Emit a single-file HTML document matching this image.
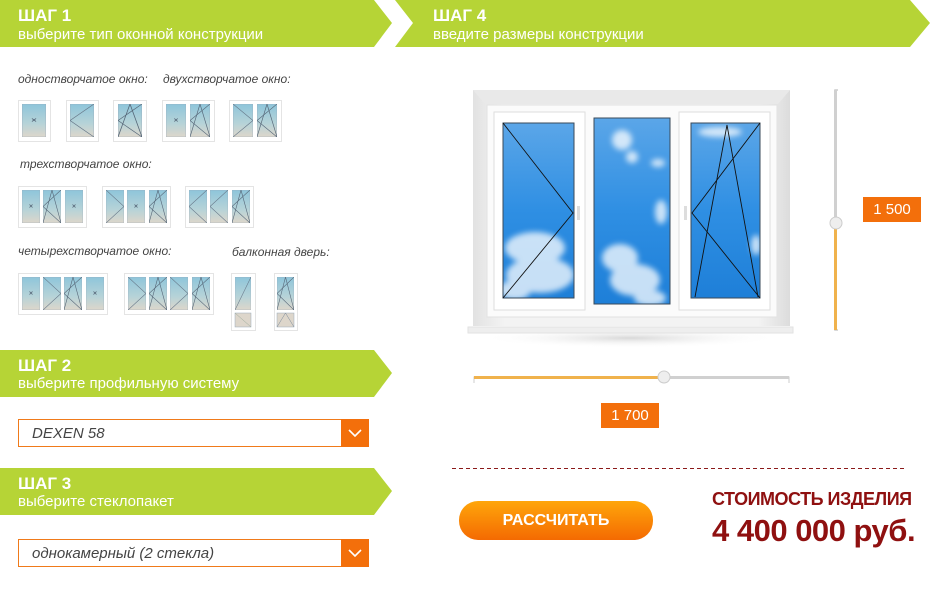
<!DOCTYPE html>
<html><head><meta charset="utf-8"><style>
*{margin:0;padding:0;box-sizing:border-box}
body{width:942px;height:604px;background:#fff;position:relative;overflow:hidden;font-family:"Liberation Sans",sans-serif}
.a{position:absolute}
.h1{position:absolute;color:#fff;font-weight:bold;font-size:17px;line-height:18px}
.h2{position:absolute;color:#fff;font-size:15px;line-height:16px}
.lbl{position:absolute;font-style:italic;font-size:12px;color:#444}
.sel{position:absolute;left:18px;width:351px;height:28px;border:1px solid #f07a1a;font-style:italic;font-size:15px;color:#444;padding:5px 0 0 13px}
.sel b{position:absolute;right:-1px;top:-1px;width:28px;height:28px;background:#f36f0b}
.tag{position:absolute;background:#f36f0b;color:#fff;font-size:15px;text-align:center;line-height:25px;width:58px;height:25px}
</style></head><body>
<svg class="a" style="left:0;top:0" width="942" height="604">
<defs>
<linearGradient id="pg" x1="0" y1="0" x2="0" y2="1"><stop offset="0" stop-color="#8ec5da"/><stop offset=".6" stop-color="#b7d3d8"/><stop offset="1" stop-color="#ddd6cb"/></linearGradient>
<linearGradient id="sky" x1="0" y1="0" x2="0" y2="1"><stop offset="0" stop-color="#5ba6e8"/><stop offset=".5" stop-color="#2f8fe3"/><stop offset="1" stop-color="#1e7fd8"/></linearGradient>
<linearGradient id="btn" x1="0" y1="0" x2="0" y2="1"><stop offset="0" stop-color="#ffa60a"/><stop offset="1" stop-color="#f46a02"/></linearGradient>
<linearGradient id="wall" x1="0" y1="0" x2="1" y2="0"><stop offset="0" stop-color="#e2e2e2"/><stop offset=".1" stop-color="#f3f3f3"/><stop offset=".9" stop-color="#f3f3f3"/><stop offset="1" stop-color="#dcdcdc"/></linearGradient>
<radialGradient id="sh" cx=".5" cy=".5" r=".5"><stop offset="0" stop-color="#d8d8d8"/><stop offset="1" stop-color="#fff" stop-opacity="0"/></radialGradient>
<filter id="bl"><feGaussianBlur stdDeviation="3"/></filter>
<clipPath id="gc"><rect x="503" y="123" width="71" height="175"/><rect x="594" y="118" width="76" height="186"/><rect x="691" y="123" width="69" height="175"/></clipPath>
<symbol id="F" viewBox="0 0 18 33" preserveAspectRatio="none"><rect width="18" height="33" fill="url(#pg)" stroke="#9ab" stroke-width=".5"/><path d="M7.5 14.5l3 3M10.5 14.5l-3 3" stroke="#567" stroke-width=".8"/></symbol>
<symbol id="L" viewBox="0 0 18 33" preserveAspectRatio="none"><rect width="18" height="33" fill="url(#pg)" stroke="#9ab" stroke-width=".5"/><path d="M18 0L0 16.5 18 33" stroke="#678" stroke-width=".6" fill="none"/></symbol>
<symbol id="R" viewBox="0 0 18 33" preserveAspectRatio="none"><rect width="18" height="33" fill="url(#pg)" stroke="#9ab" stroke-width=".5"/><path d="M0 0L18 16.5 0 33" stroke="#678" stroke-width=".6" fill="none"/></symbol>
<symbol id="T" viewBox="0 0 18 33" preserveAspectRatio="none"><rect width="18" height="33" fill="url(#pg)" stroke="#9ab" stroke-width=".5"/><path d="M0 33L9 0 18 33M18 0L0 16.5 18 33" stroke="#567" stroke-width=".6" fill="none"/></symbol>
<symbol id="D" viewBox="0 0 18 33" preserveAspectRatio="none"><rect width="18" height="33" fill="url(#pg)" stroke="#9ab" stroke-width=".5"/><path d="M18 0L0 33" stroke="#678" stroke-width=".6"/></symbol>
</defs>
<polygon points="0,0 374,0 392,23 374,47 0,47" fill="#b6d436"/>
<polygon points="395,0 910,0 930,23 910,47 395,47 413,23" fill="#b6d436"/>
<polygon points="0,350 374,350 392,373 374,397 0,397" fill="#b6d436"/>
<polygon points="0,468 374,468 392,491 374,515 0,515" fill="#b6d436"/>
<g fill="#fff" stroke="#e4e4e4">
<rect x="18.5" y="100.5" width="32" height="41"/><rect x="66.5" y="100.5" width="32" height="41"/><rect x="113.5" y="100.5" width="33" height="41"/><rect x="162.5" y="100.5" width="52" height="41"/><rect x="229.5" y="100.5" width="52" height="41"/>
<rect x="18.5" y="186.5" width="68" height="41"/><rect x="102.5" y="186.5" width="68" height="41"/><rect x="185.5" y="186.5" width="68" height="41"/>
<rect x="18.5" y="273.5" width="89" height="41"/><rect x="124.5" y="273.5" width="89" height="41"/>
<rect x="231.5" y="273.5" width="24" height="57"/><rect x="274.5" y="273.5" width="23" height="57"/>
</g>
<use href="#F" x="22" y="104" width="24" height="33"/>
<use href="#L" x="70" y="104" width="24" height="33"/>
<use href="#T" x="118" y="104" width="24" height="33"/>
<use href="#F" x="166" y="104" width="20" height="33"/><use href="#T" x="190" y="104" width="20" height="33"/>
<use href="#R" x="233" y="104" width="20" height="33"/><use href="#T" x="257" y="104" width="20" height="33"/>
<use href="#F" x="22" y="190" width="18" height="33"/><use href="#T" x="43" y="190" width="18" height="33"/><use href="#F" x="65" y="190" width="18" height="33"/>
<use href="#R" x="106" y="190" width="18" height="33"/><use href="#F" x="127" y="190" width="18" height="33"/><use href="#T" x="149" y="190" width="18" height="33"/>
<use href="#L" x="189" y="190" width="18" height="33"/><use href="#L" x="210" y="190" width="18" height="33"/><use href="#T" x="232" y="190" width="18" height="33"/>
<use href="#F" x="22" y="277" width="18" height="33"/><use href="#R" x="43" y="277" width="18" height="33"/><use href="#T" x="64" y="277" width="18" height="33"/><use href="#F" x="86" y="277" width="18" height="33"/>
<use href="#R" x="128" y="277" width="18" height="33"/><use href="#T" x="149" y="277" width="18" height="33"/><use href="#R" x="170" y="277" width="18" height="33"/><use href="#T" x="192" y="277" width="18" height="33"/>
<use href="#D" x="235" y="277" width="16" height="33"/><rect x="235" y="313" width="16" height="14" fill="#ddd6cb" stroke="#9ab" stroke-width=".5"/><path d="M235 313l16 14" stroke="#9a9" stroke-width=".5"/>
<use href="#T" x="277" y="277" width="17" height="33"/><rect x="277" y="313" width="17" height="14" fill="#ddd6cb" stroke="#9ab" stroke-width=".5"/><path d="M277 327l8.5-14 8.5 14" stroke="#789" stroke-width=".5" fill="none"/>
<ellipse cx="630" cy="338" rx="150" ry="10" fill="url(#sh)"/>
<rect x="473" y="90" width="317" height="236" fill="url(#wall)"/>
<path d="M473 90h317l-12 14H485z" fill="#e9e9e9"/>
<rect x="487" y="105" width="290" height="212" fill="#fbfbfb" stroke="#e2e2e2"/>
<rect x="494" y="112" width="91" height="198" fill="#fff" stroke="#ddd"/>
<rect x="679" y="112" width="91" height="198" fill="#fff" stroke="#ddd"/>
<rect x="503" y="123" width="71" height="175" fill="url(#sky)"/>
<rect x="594" y="118" width="76" height="186" fill="url(#sky)"/>
<rect x="691" y="123" width="69" height="175" fill="url(#sky)"/>
<g clip-path="url(#gc)"><g fill="#fff" opacity=".75" filter="url(#bl)">
<ellipse cx="535" cy="248" rx="30" ry="16"/><ellipse cx="540" cy="275" rx="34" ry="18"/><ellipse cx="515" cy="290" rx="16" ry="10"/>
<ellipse cx="620" cy="258" rx="18" ry="14"/><ellipse cx="635" cy="280" rx="25" ry="16"/><ellipse cx="650" cy="298" rx="16" ry="8"/>
<ellipse cx="622" cy="140" rx="10" ry="10"/><ellipse cx="632" cy="157" rx="6" ry="6"/><ellipse cx="658" cy="163" rx="7" ry="4"/><ellipse cx="661" cy="212" rx="6" ry="12"/>
<ellipse cx="720" cy="132" rx="22" ry="5"/><ellipse cx="756" cy="245" rx="5" ry="10"/>
</g></g>
<rect x="503" y="123" width="71" height="175" fill="none" stroke="#3a4a5a"/>
<rect x="594" y="118" width="76" height="186" fill="none" stroke="#3a4a5a"/>
<rect x="691" y="123" width="69" height="175" fill="none" stroke="#3a4a5a"/>
<path d="M503 123L573 213 503 298M760 123L692 213 760 298M695 297L727 125 758 297" stroke="#111" stroke-width=".9" fill="none"/>
<rect x="577" y="206" width="3" height="14" fill="#ddd"/><rect x="684" y="206" width="3" height="14" fill="#ddd"/>
<rect x="468" y="327" width="325" height="6" fill="#eee" stroke="#e2e2e2"/>
<path d="M838 90h-3v240h3" stroke="#ccc" stroke-width="1.5" fill="none"/>
<rect x="834" y="90" width="3" height="133" fill="#d0d0d0"/>
<rect x="834" y="223" width="3" height="107" fill="#f0b24c"/>
<circle cx="836" cy="223" r="6" fill="#eee" stroke="#ccc"/>
<path d="M474 383v-6h315v6" stroke="#ccc" stroke-width="1" fill="none"/>
<rect x="474" y="376" width="190" height="3" fill="#f0b24c"/>
<rect x="664" y="376" width="125" height="3" fill="#d0d0d0"/>
<circle cx="664" cy="377" r="6" fill="#eee" stroke="#ccc"/>
<line x1="452" y1="468.5" x2="906" y2="468.5" stroke="#8b1a1a" stroke-dasharray="4,3"/>
<rect x="459" y="501" width="194" height="39" rx="19" fill="url(#btn)"/>
</svg>
<div class="h1" style="left:18px;top:7px">ШАГ 1</div><div class="h2" style="left:18px;top:27px">выберите тип оконной конструкции</div>
<div class="h1" style="left:433px;top:7px">ШАГ 4</div><div class="h2" style="left:433px;top:27px">введите размеры конструкции</div>
<div class="h1" style="left:18px;top:357px">ШАГ 2</div><div class="h2" style="left:18px;top:376px">выберите профильную систему</div>
<div class="h1" style="left:18px;top:475px">ШАГ 3</div><div class="h2" style="left:18px;top:494px">выберите стеклопакет</div>
<div class="lbl" style="left:18px;top:72px">одностворчатое окно:</div>
<div class="lbl" style="left:163px;top:72px">двухстворчатое окно:</div>
<div class="lbl" style="left:20px;top:157px">трехстворчатое окно:</div>
<div class="lbl" style="left:18px;top:244px">четырехстворчатое окно:</div>
<div class="lbl" style="left:232px;top:245px">балконная дверь:</div>
<div class="sel" style="top:419px">DEXEN 58<b></b></div>
<div class="sel" style="top:539px">однокамерный (2 стекла)<b></b></div>
<svg class="a" style="left:0;top:0;pointer-events:none" width="942" height="604"><path d="M349 430l6 6 6-6M349 550l6 6 6-6" stroke="#fff" stroke-width="1.6" fill="none"/></svg>
<div class="tag" style="left:863px;top:197px">1 500</div>
<div class="tag" style="left:601px;top:403px">1 700</div>
<div class="a" style="left:459px;top:501px;width:194px;line-height:39px;text-align:center;color:#fff;font-weight:bold;font-size:16px">РАССЧИТАТЬ</div>
<div class="a" style="left:712px;top:489px;color:#8f1010;font-weight:bold;font-size:18px;letter-spacing:-.5px">СТОИМОСТЬ ИЗДЕЛИЯ</div>
<div class="a" style="left:712px;top:513px;color:#8f1010;font-weight:bold;font-size:31px;letter-spacing:-.5px">4 400 000 руб.</div>
</body></html>
